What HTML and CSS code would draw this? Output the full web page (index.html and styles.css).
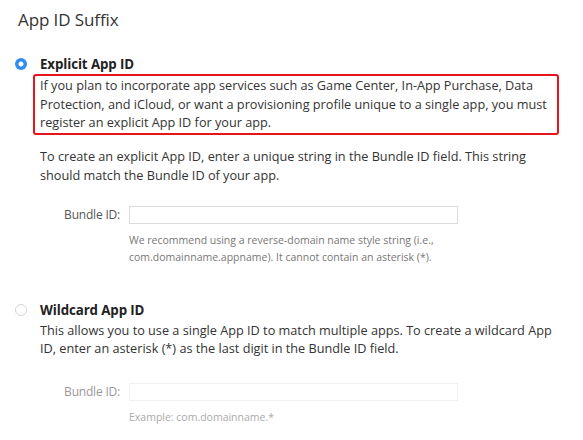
FILE: index.html
```html
<!DOCTYPE html>
<html>
<head>
<meta charset="utf-8">
<link rel="stylesheet" href="styles.css">
</head>
<body>
<div class="page">
  <h2 class="title">App ID Suffix</h2>

  <section class="option">
    <div class="option-head">
      <span class="radio radio-on"></span>
      <span class="option-name">Explicit App ID</span>
    </div>
    <p class="desc highlight">If you plan to incorporate app services such as Game Center, In-App Purchase, Data Protection, and iCloud, or want a provisioning profile unique to a single app, you must register an explicit App ID for your app.</p>
    <p class="desc second">To create an explicit App ID, enter a unique string in the Bundle ID field. This string should match the Bundle ID of your app.</p>
    <div class="field">
      <label class="field-label">Bundle ID:</label>
      <div class="field-body">
        <div class="input"></div>
        <p class="hint">We recommend using a reverse-domain name style string (i.e., com.domainname.appname). It cannot contain an asterisk (*).</p>
      </div>
    </div>
  </section>

  <section class="option wild">
    <div class="option-head">
      <span class="radio"></span>
      <span class="option-name">Wildcard App ID</span>
    </div>
    <p class="desc">This allows you to use a single App ID to match multiple apps. To create a wildcard App ID, enter an asterisk (*) as the last digit in the Bundle ID field.</p>
    <div class="field disabled">
      <label class="field-label">Bundle ID:</label>
      <div class="field-body">
        <div class="input"></div>
        <p class="hint">Example: com.domainname.*</p>
      </div>
    </div>
  </section>
</div>
</body>
</html>
```
FILE: styles.css
```css
* { box-sizing: border-box; }
html, body { margin: 0; padding: 0; background: #fff; }
body {
  font-family: "Open Sans", "Noto Sans", sans-serif;
  color: #333;
  width: 583px;
  height: 440px;
  overflow: hidden;
}
.page { padding: 0 0 0 18px; }
.title {
  margin: 0;
  padding-top: 8px;
  font-size: 17px;
  font-weight: 400;
  line-height: 24px;
  color: #333;
  letter-spacing: -0.1px;
}
.option { margin-top: 23px; }
.option-head {
  display: flex;
  align-items: center;
  height: 18px;
  margin-left: -3px;
}
.radio {
  width: 12px;
  height: 12px;
  border-radius: 50%;
  border: 1px solid #d6d6d6;
  background: #fff;
  margin-right: 13px;
  flex: none;
}
.radio-on {
  border: none;
  background: radial-gradient(circle, #fff 0 2.2px, #2f8df6 2.8px);
}
.option-name {
  font-weight: 700;
  font-size: 13.3px;
  color: #222;
  letter-spacing: -0.1px;
}
.desc {
  margin: 2px 0 0 15px;
  font-size: 12.7px;
  line-height: 18.5px;
  color: #333;
  width: 526px;
  letter-spacing: 0;
}
.highlight {
  border: 2px solid #e8141b;
  border-radius: 3px;
  padding: 0 5px 0 5px;
  margin-left: 15px;
  height: 61px;
  margin-top: 1px;
}
.second {
  padding-left: 7px;
  margin-top: 12px;
}
.field {
  display: flex;
  margin-top: 22px;
}
.field-label {
  width: 111px;
  text-align: right;
  font-size: 12px;
  color: #555;
  line-height: 18px;
  padding-right: 9px;
  flex: none;
  letter-spacing: -0.2px;
}
.field-body { width: 329px; }
.input {
  height: 18px;
  border: 1px solid #dcdcdc;
  background: #fff;
}
.hint {
  margin: 8px 0 0 0;
  font-size: 10.5px;
  line-height: 17px;
  color: #777;
  letter-spacing: 0;
  width: 380px;
}
.wild { margin-top: 35px; }
.wild .desc { padding-left: 7px; line-height: 18px; }
.disabled { margin-top: 26px; }
.disabled .field-label { color: #999; }
.disabled .input { border-color: #f0f0f0; }
.disabled .hint { color: #aaa; margin-top: 8px; }
```
